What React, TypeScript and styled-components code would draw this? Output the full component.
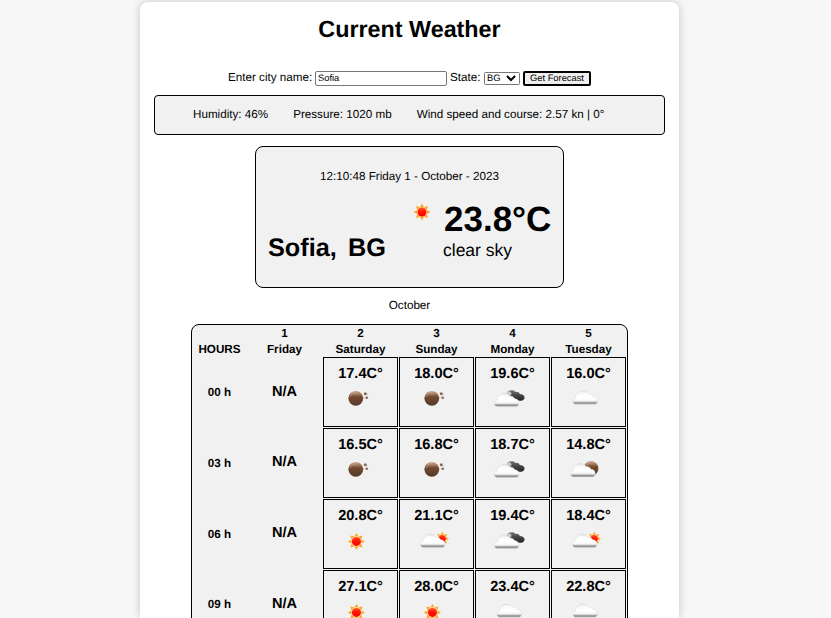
import React from "react";
import styled, { createGlobalStyle } from "styled-components";

const GlobalStyle = createGlobalStyle`
  * { box-sizing: border-box; }
  html, body { margin: 0; height: 618px; overflow: hidden; }
  body {
    background: #f7f7f7;
    color: #000;
    font: 11.67px/16px "Liberation Sans", Arial, sans-serif;
    text-rendering: geometricPrecision;
  }
  input, select, button { text-rendering: geometricPrecision; }
`;

const Card = styled.main`
  width: 539px;
  height: 616px;
  overflow: hidden;
  margin: 2px 0 0 140px;
  padding: 0 14px;
  background: #fff;
  border-radius: 8px 8px 0 0;
  box-shadow: 0 0 10px rgba(0, 0, 0, 0.2);
  display: flex;
  flex-direction: column;
  align-items: center;
`;

const Title = styled.h1`
  margin: 13px 0 0;
  font-size: 23.33px;
  line-height: 28px;
  white-space: nowrap;
`;

const Form = styled.form`
  display: flex;
  align-items: center;
  height: 16px;
  margin-top: 27px;
  white-space: nowrap;
`;

const FieldLabel = styled.label<{ $width: number }>`
  width: ${(p) => p.$width}px;
  height: 16px;
`;

const CityInput = styled.input`
  width: 132px;
  height: 15px;
  margin-right: 3px;
  padding: 0 2px;
  border: 1px solid #767676;
  border-radius: 2px;
  background: #fff;
  font: 9.33px "Liberation Sans", Arial, sans-serif;
`;

const StateSelect = styled.select`
  zoom: 0.7;
  width: 51.43px;
  height: 18.58px;
  margin: 0 4.28px 0 0;
  padding: 0;
  border: 1px solid #767676;
  border-radius: 2px;
  background: #fff;
  color: #000;
  font: 13.333px "Liberation Sans", Arial, sans-serif;
`;

const SubmitButton = styled.button`
  width: 68px;
  height: 15px;
  padding: 0;
  border: 2px solid #000;
  border-radius: 2px;
  background: #efefef;
  color: #000;
  font: 9.33px/11px "Liberation Sans", Arial, sans-serif;
`;

const Conditions = styled.section`
  display: flex;
  flex: none;
  width: 511px;
  height: 40px;
  margin-top: 9px;
  padding: 11px 0 0 38px;
  gap: 25px;
  border: 1px solid #000;
  border-radius: 4px;
  background: #f1f1f1;
  white-space: nowrap;
`;

const Current = styled.section`
  flex: none;
  width: 309px;
  height: 142px;
  margin-top: 11px;
  padding-top: 22px;
  border: 1px solid #000;
  border-radius: 8px;
  background: #f1f1f1;
`;

const Timestamp = styled.div`
  text-align: center;
`;

const CurrentBody = styled.div`
  display: flex;
  padding: 15px 0 0 12px;
  white-space: nowrap;
`;

const Place = styled.h2`
  width: 145px;
  margin: 32px 0 0;
  font-size: 25.3px;
  line-height: 32px;
  word-spacing: 4px;
`;

const Reading = styled.div`
  padding-left: 12px;
`;

const Temperature = styled.div`
  padding: 1px 0 0 1px;
  font-size: 35px;
  font-weight: bold;
  line-height: 38px;
`;

const Description = styled.div`
  font-size: 17.5px;
  line-height: 22px;
`;

const Month = styled.div`
  margin-top: 10px;
`;

const Forecast = styled.section`
  display: grid;
  flex: none;
  grid-template-columns: 53px repeat(5, 75px);
  grid-template-rows: 15px 14px;
  grid-auto-rows: 70px;
  gap: 1px;
  margin-top: 10px;
  width: 437px;
  padding: 1px 1px;
  border: 1px solid #000;
  border-radius: 8px;
  background: #f1f1f1;
  font-weight: bold;
  text-align: center;
`;

const Heading = styled.div`
  line-height: 15px;
`;

const Hour = styled.div<{ $line: number }>`
  line-height: ${(p) => p.$line}px;
`;

const Missing = styled.div<{ $line: number }>`
  font-size: 14.58px;
  line-height: ${(p) => p.$line}px;
`;

const Slot = styled.div`
  display: flex;
  flex-direction: column;
  align-items: center;
  padding-top: 8px;
  border: 1px solid #000;
  font-size: 14.58px;
  line-height: 16px;
`;

const Icon = styled.svg`
  display: block;
  width: 41px;
  height: 25px;
  margin-top: 3px;
`;

const SmallSun = styled.svg`
  width: 18px;
  height: 18px;
  margin-top: 3px;
`;

type Kind = "sun" | "moon" | "cloud" | "broken" | "few" | "fewNight";

const GradientSheet = styled.svg`
  position: absolute;
  width: 0;
  height: 0;
`;

const Gradients = () => (
  <GradientSheet>
    <defs>
      <linearGradient id="white-cloud" x1="0" y1="0" x2="0" y2="1">
        <stop offset="0" stopColor="#e2e2e2" />
        <stop offset=".2" stopColor="#fafafa" />
        <stop offset=".45" stopColor="#fff" />
        <stop offset=".7" stopColor="#fafafa" />
        <stop offset=".8" stopColor="#dcdcdc" />
        <stop offset=".9" stopColor="#8c8c8c" />
        <stop offset="1" stopColor="#9c9c9c" />
      </linearGradient>
      <linearGradient id="dark-cloud" x1="0" y1="0" x2="0" y2="1">
        <stop offset="0" stopColor="#777" />
        <stop offset=".4" stopColor="#4c4c4c" />
        <stop offset="1" stopColor="#222" />
      </linearGradient>
      <linearGradient id="brown-moon" x1="0" y1="0" x2="0" y2="1">
        <stop offset="0" stopColor="#d0a98f" />
        <stop offset=".22" stopColor="#a17a60" />
        <stop offset=".4" stopColor="#75492d" />
        <stop offset="1" stopColor="#523a2a" />
      </linearGradient>
      <linearGradient id="sun-core" x1="0" y1="0" x2="0" y2="1">
        <stop offset="0" stopColor="#ff5a28" />
        <stop offset=".45" stopColor="#ff1608" />
        <stop offset="1" stopColor="#f00" />
      </linearGradient>
    </defs>
  </GradientSheet>
);

const RAYS = [0, 45, 90, 135, 180, 225, 270, 315];

const Sun = ({ x, y, scale = 1 }: { x: number; y: number; scale?: number }) => (
  <g transform={`translate(${x} ${y}) scale(${scale})`}>
    {RAYS.map((a) => (
      <path key={a} d="M-2-4.8 0-8.5 2-4.8Z" fill="#ffa31c" transform={`rotate(${a})`} />
    ))}
    <circle r="5.1" fill="#ffd28a" />
    <circle r="4.5" fill="url(#sun-core)" />
  </g>
);

const Cloud = ({ x, y }: { x: number; y: number }) => (
  <path
    transform={`translate(${x} ${y})`}
    d="M2.5 13.4C.6 13 0 11.3.3 9.6.6 8.3 1.5 7.4 2.8 7.2 2.8 4.8 3.8 2.9 5.6 2.6 6.4.7 8.4-.2 10.8.1c2.1.3 3.6 1.3 4.4 2.8 2.4-.2 4.6.9 5.3 2.9 2.5-.1 4.2 1.6 4.2 4.1 0 2.2-1 3.5-3 3.5Z"
    fill="url(#white-cloud)"
    stroke="#d4d4d4"
    strokeWidth=".4"
  />
);

const Moon = ({ x, y }: { x: number; y: number }) => (
  <g>
    <circle cx={x} cy={y} r="7.4" fill="url(#brown-moon)" />
    <path d={`M${x - 5.6} ${y - 1.2}q1-4.3 5.6-4.5`} fill="none" stroke="#e3cdbf" strokeWidth=".7" opacity=".5" />
  </g>
);

const WeatherIcon = ({ kind }: { kind: Kind }) => (
  <Icon viewBox="0 0 41 25">
    {kind === "sun" && <Sun x={16.4} y={14.4} />}
    {kind === "moon" && (
      <>
        <Moon x={15.8} y={13.3} />
        <g fill="#8a6857">
          <circle cx="25.3" cy="8.7" r="1.5" />
          <circle cx="26.7" cy="12.8" r="1.3" />
          <circle cx="23.9" cy="12.2" r=".4" />
          <circle cx="27.8" cy="9.6" r=".4" />
        </g>
      </>
    )}
    {kind === "cloud" && <Cloud x={4.8} y={5.8} />}
    {kind === "broken" && (
      <>
        <path
          d="M14.6 10C14.4 7 16.6 5 19.3 5.4c2-.2 3.4.4 4.2 1.5 2-.5 3.8.5 4.3 2.1 2.6 0 5 1.4 4.8 3.6-.2 2.2-1.8 3.2-4 3.1-3 .1-5-.7-6-2.4-2.5.1-4.1-.8-5-3.3Z"
          fill="url(#dark-cloud)"
        />
        <path d="M14.4 9.4c0-2.1 1.6-3.3 3.2-3 1.3.3 1.9 1.3 1.9 2.7l-1.4 2Z" fill="#c8c8c8" />
        <Cloud x={2.2} y={8} />
      </>
    )}
    {kind === "few" && (
      <>
        <Sun x={26.2} y={11.6} scale={0.8} />
        <Cloud x={4.2} y={7} />
      </>
    )}
    {kind === "fewNight" && (
      <>
        <Moon x={23} y={12.4} />
        <Cloud x={2.5} y={7.5} />
      </>
    )}
  </Icon>
);

const days = [
  ["1", "Friday"],
  ["2", "Saturday"],
  ["3", "Sunday"],
  ["4", "Monday"],
  ["5", "Tuesday"],
];

type Row = { hour: string; hourLine: number; missingLine: number; slots: [string, Kind][] };

const rows: Row[] = [
  { hour: "00 h", hourLine: 72, missingLine: 70, slots: [["17.4", "moon"], ["18.0", "moon"], ["19.6", "broken"], ["16.0", "cloud"]] },
  { hour: "03 h", hourLine: 72, missingLine: 68, slots: [["16.5", "moon"], ["16.8", "moon"], ["18.7", "broken"], ["14.8", "fewNight"]] },
  { hour: "06 h", hourLine: 72, missingLine: 68, slots: [["20.8", "sun"], ["21.1", "few"], ["19.4", "broken"], ["18.4", "few"]] },
  { hour: "09 h", hourLine: 70, missingLine: 68, slots: [["27.1", "sun"], ["28.0", "sun"], ["23.4", "cloud"], ["22.8", "cloud"]] },
];

export default function App() {
  return (
    <>
      <GlobalStyle />
      <Gradients />
      <Card>
        <Title>Current Weather</Title>
        <Form onSubmit={(e) => e.preventDefault()}>
          <FieldLabel htmlFor="city" $width={87}>Enter city name:</FieldLabel>
          <CityInput id="city" defaultValue="Sofia" />
          <FieldLabel htmlFor="state" $width={34}>State:</FieldLabel>
          <StateSelect id="state" defaultValue="BG">
            <option>BG</option>
          </StateSelect>
          <SubmitButton>Get Forecast</SubmitButton>
        </Form>
        <Conditions>
          <span>Humidity: 46%</span>
          <span>Pressure: 1020 mb</span>
          <span>Wind speed and course: 2.57 kn | 0°</span>
        </Conditions>
        <Current>
          <Timestamp>12:10:48 Friday 1 - October - 2023</Timestamp>
          <CurrentBody>
            <Place>Sofia, BG</Place>
            <SmallSun viewBox="0 0 18 18">
              <Sun x={9} y={9} />
            </SmallSun>
            <Reading>
              <Temperature>23.8°C</Temperature>
              <Description>clear sky</Description>
            </Reading>
          </CurrentBody>
        </Current>
        <Month>October</Month>
        <Forecast>
          <Heading />
          {days.map(([date]) => (
            <Heading key={date}>{date}</Heading>
          ))}
          <Heading>HOURS</Heading>
          {days.map(([, name]) => (
            <Heading key={name}>{name}</Heading>
          ))}
          {rows.map(({ hour, hourLine, missingLine, slots }) => (
            <React.Fragment key={hour}>
              <Hour $line={hourLine}>{hour}</Hour>
              <Missing $line={missingLine}>N/A</Missing>
              {slots.map(([temp, kind], i) => (
                <Slot key={i}>
                  <span>{temp}C°</span>
                  <WeatherIcon kind={kind} />
                </Slot>
              ))}
            </React.Fragment>
          ))}
        </Forecast>
      </Card>
    </>
  );
}
